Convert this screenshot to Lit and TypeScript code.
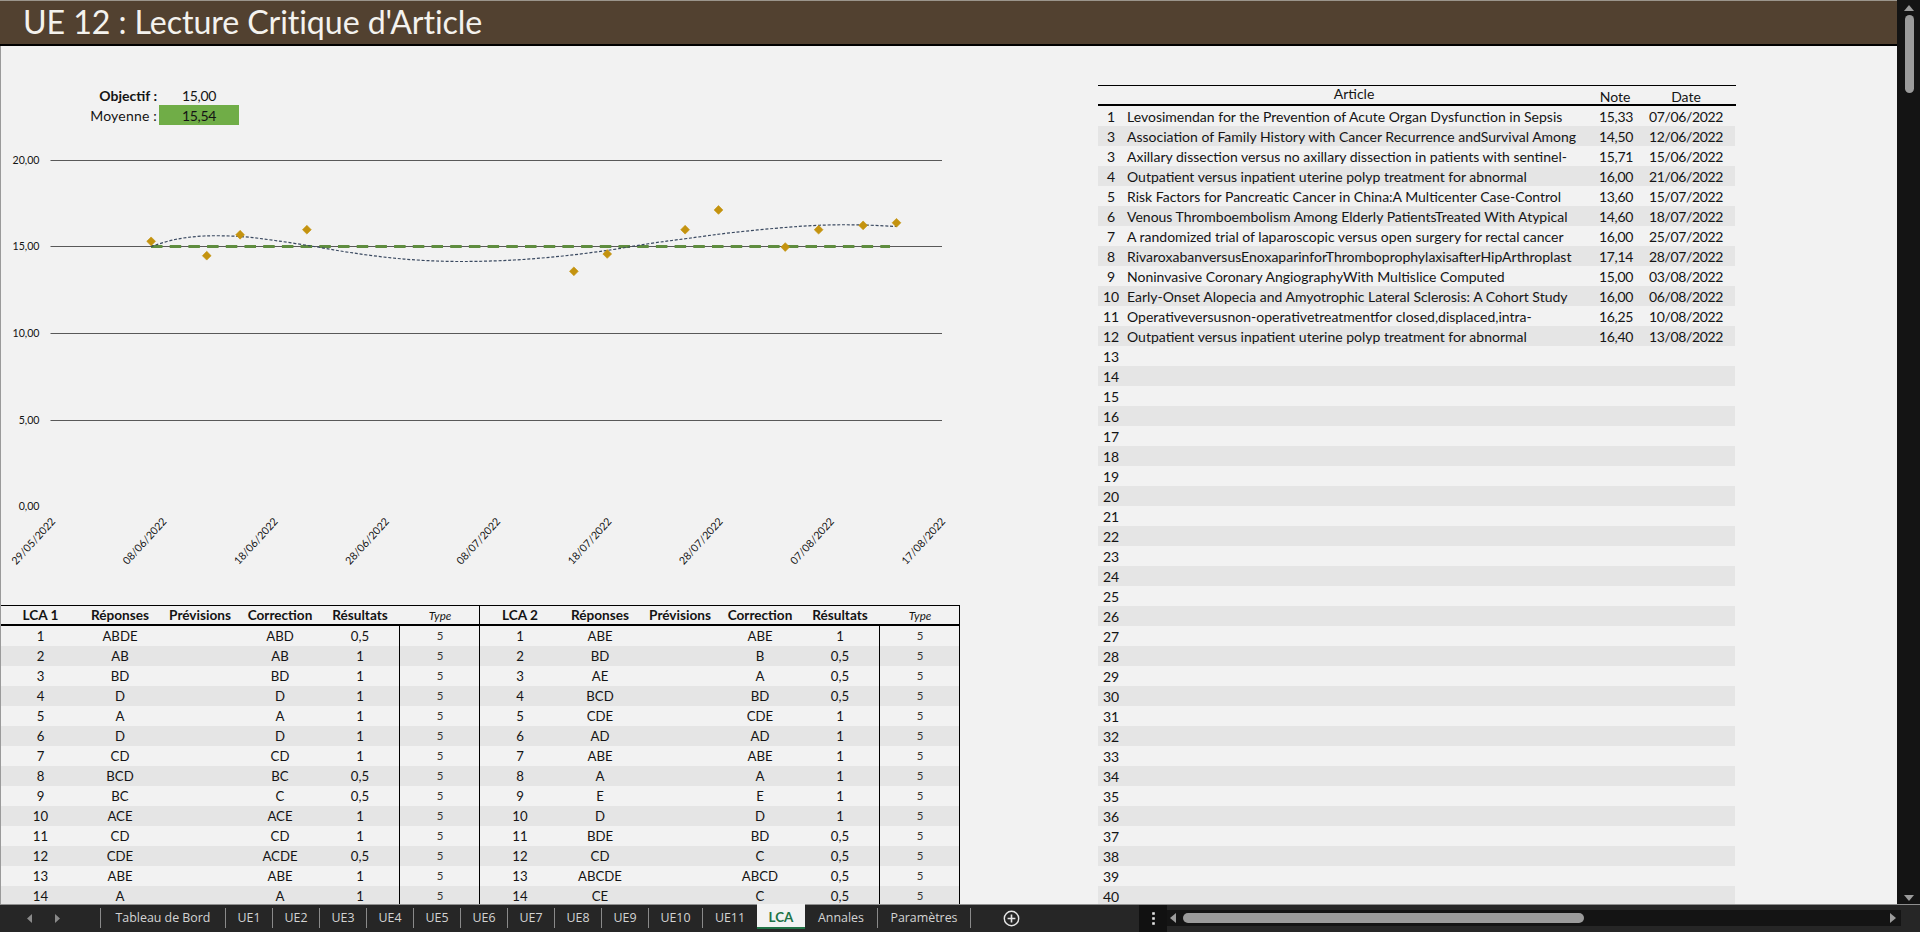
import { LitElement, html, css, svg } from "lit";
import { customElement } from "lit/decorators.js";

const ARTICLES: [string, string, string, string][] = [
  ["1", "Levosimendan for the Prevention of Acute Organ Dysfunction in Sepsis", "15,33", "07/06/2022"],
  ["3", "Association of Family History with Cancer Recurrence andSurvival Among", "14,50", "12/06/2022"],
  ["3", "Axillary dissection versus no axillary dissection in patients with sentinel-", "15,71", "15/06/2022"],
  ["4", "Outpatient versus inpatient uterine polyp treatment for abnormal", "16,00", "21/06/2022"],
  ["5", "Risk Factors for Pancreatic Cancer in China:A Multicenter Case-Control", "13,60", "15/07/2022"],
  ["6", "Venous Thromboembolism Among Elderly PatientsTreated With Atypical", "14,60", "18/07/2022"],
  ["7", "A randomized trial of laparoscopic versus open surgery for rectal cancer", "16,00", "25/07/2022"],
  ["8", "RivaroxabanversusEnoxaparinforThromboprophylaxisafterHipArthroplast", "17,14", "28/07/2022"],
  ["9", "Noninvasive Coronary AngiographyWith Multislice Computed", "15,00", "03/08/2022"],
  ["10", "Early-Onset Alopecia and Amyotrophic Lateral Sclerosis: A Cohort Study", "16,00", "06/08/2022"],
  ["11", "Operativeversusnon-operativetreatmentfor closed,displaced,intra-", "16,25", "10/08/2022"],
  ["12", "Outpatient versus inpatient uterine polyp treatment for abnormal", "16,40", "13/08/2022"],
];
for (let i = 13; i <= 40; i++) ARTICLES.push([String(i), "", "", ""]);

const LCA1 = [
  ["ABDE", "ABD", "0,5"], ["AB", "AB", "1"], ["BD", "BD", "1"], ["D", "D", "1"], ["A", "A", "1"],
  ["D", "D", "1"], ["CD", "CD", "1"], ["BCD", "BC", "0,5"], ["BC", "C", "0,5"], ["ACE", "ACE", "1"],
  ["CD", "CD", "1"], ["CDE", "ACDE", "0,5"], ["ABE", "ABE", "1"], ["A", "A", "1"],
];
const LCA2 = [
  ["ABE", "ABE", "1"], ["BD", "B", "0,5"], ["AE", "A", "0,5"], ["BCD", "BD", "0,5"], ["CDE", "CDE", "1"],
  ["AD", "AD", "1"], ["ABE", "ABE", "1"], ["A", "A", "1"], ["E", "E", "1"], ["D", "D", "1"],
  ["BDE", "BD", "0,5"], ["CD", "C", "0,5"], ["ABCDE", "ABCD", "0,5"], ["CE", "C", "0,5"],
];

const TABS: [string, number][] = [
  ["Tableau de Bord", 125], ["UE1", 47], ["UE2", 47], ["UE3", 47], ["UE4", 47], ["UE5", 47], ["UE6", 47],
  ["UE7", 47], ["UE8", 47], ["UE9", 47], ["UE10", 54], ["UE11", 55], ["LCA", 48], ["Annales", 72], ["Paramètres", 93],
];

const X = (d: number) => 51 + 11.125 * d;
const Y = (v: number) => 507 - v * 17.33;
const POINTS: [number, number][] = [
  [9, 15.33], [14, 14.5], [17, 15.71], [23, 16], [47, 13.6], [50, 14.6], [57, 16], [60, 17.14], [66, 15], [69, 16], [73, 16.25], [76, 16.4],
];
const TREND: [number, number][] = [
  [151, 246.5], [175, 239.5], [204, 236], [240, 236.5], [275, 240.5], [314, 246.5], [350, 252.5], [388, 257.5], [425, 260.5], [465, 261.5],
  [514, 260], [563, 256], [610, 250], [650, 243.5], [687, 238.5], [733, 232.5], [787, 227.3], [827, 225], [863, 225], [897, 226.5],
];
function spline(p: [number, number][]) {
  let d = `M${p[0][0]} ${p[0][1]}`;
  for (let i = 0; i < p.length - 1; i++) {
    const a = p[Math.max(i - 1, 0)], b = p[i], c = p[i + 1], e = p[Math.min(i + 2, p.length - 1)];
    d += ` C${b[0] + (c[0] - a[0]) / 6} ${b[1] + (c[1] - a[1]) / 6} ${c[0] - (e[0] - b[0]) / 6} ${c[1] - (e[1] - b[1]) / 6} ${c[0]} ${c[1]}`;
  }
  return d;
}
const AXIS_Y: [string, number][] = [["20,00", 160.5], ["15,00", 246.5], ["10,00", 333.5], ["5,00", 420.5], ["0,00", 507]];
const DATES = ["29/05/2022", "08/06/2022", "18/06/2022", "28/06/2022", "08/07/2022", "18/07/2022", "28/07/2022", "07/08/2022", "17/08/2022"];

@customElement("app-root")
export class AppRoot extends LitElement {
  static styles = css`
    :host { display: block; width: 1920px; height: 932px; overflow: hidden; font-family: "Lato", "Open Sans", sans-serif; color: #141414; background: #f2f2f2; }
    .app { display: flex; flex-direction: column; height: 932px; }
    .top { display: flex; height: 904px; }
    .main { flex: 1; min-width: 0; display: flex; flex-direction: column; }
    .title { height: 46px; box-sizing: border-box; border-top: 1px solid #9b958c; border-bottom: 2px solid #000; background: #524130; color: #f4f2ee; font-size: 32.2px; line-height: 42px; padding-left: 23px; letter-spacing: -0.1px; white-space: nowrap; }
    .sheet { flex: 1; min-height: 0; display: flex; overflow: hidden; border-left: 1px solid #9a9a9a; background: #f2f2f2; }
    .left { width: 959px; flex: none; padding-top: 39px; display: flex; flex-direction: column; }
    .stats { display: grid; grid-template-columns: 78px 80px 80px; grid-auto-rows: 20px; font-size: 14px; line-height: 21px; }
    .stats .lab { grid-column: 2; text-align: right; padding-right: 2px; white-space: nowrap; letter-spacing: 0.2px; }
    .stats .b { font-weight: 700; letter-spacing: 0; }
    .stats .val { text-align: center; letter-spacing: -0.35px; }
    .stats .green { background: #70ad47; }
    .chart { display: block; width: 959px; height: 480px; flex: none; }
    .ax { font-size: 10.6px; fill: #141414; font-family: "Lato", sans-serif; }
    .tables { display: flex; }
    .lca { width: 480px; box-sizing: border-box; border-right: 1px solid #000; }
    .lca.one { width: 479px; }
    .hrow, .row { display: grid; grid-template-columns: repeat(6, 80px); text-align: center; }
    .lca.one .hrow, .lca.one .row { grid-template-columns: 79px repeat(5, 80px); }
    .hrow { height: 21px; box-sizing: border-box; border-top: 1px solid #000; border-bottom: 2px solid #000; font-weight: 700; font-size: 13.6px; line-height: 19px; white-space: nowrap; }
    .hrow .ty { font-weight: 400; font-style: italic; font-size: 11.6px; line-height: 20px; }
    .row { height: 20px; font-size: 13.2px; line-height: 21px; }
    .row.alt { background: #e5e5e5; }
    .row .ty { border-left: 1px solid #000; margin-left: -1px; font-size: 11.4px; line-height: 20px; color: #333; }
    .right { width: 638px; flex: none; padding-top: 39px; margin-left: 138px; }
    .ahead { display: grid; grid-template-columns: 26px 460px 62px 80px; height: 21px; box-sizing: border-box; border-top: 1px solid #000; border-bottom: 2px solid #000; font-size: 14px; text-align: center; }
    .ahead .art { line-height: 16px; }
    .ahead .nt { line-height: 21px; }
    .arow { display: grid; grid-template-columns: 26px 463px 58px 82px; width: 637px; height: 20px; font-size: 14px; line-height: 22px; white-space: nowrap; }
    .arow.alt { background: #e5e5e5; }
    .arow .n { text-align: center; }
    .arow .t { padding-left: 3px; overflow: hidden; }
    .arow .c { text-align: center; letter-spacing: -0.35px; }
    .vbar { width: 23px; flex: none; background: #141414; display: flex; flex-direction: column; align-items: center; padding: 5px 0 3px 1px; box-sizing: border-box; }
    .vthumb { width: 9px; height: 78px; margin-top: 4px; border-radius: 5px; background: #9b9b9b; }
    .vspace { flex: 1; }
    .tabbar { height: 28px; box-sizing: border-box; display: flex; background: #262626; border-top: 1px solid #8f8f8f; }
    .nav { width: 100px; flex: none; display: flex; align-items: center; padding-left: 27px; gap: 23px; box-sizing: border-box; }
    .tab { box-sizing: border-box; flex: none; margin-top: 3px; height: 20px; border-left: 1px solid #8a8a8a; color: #d4d4d4; font-family: "Open Sans", sans-serif; font-size: 12.4px; line-height: 19px; text-align: center; white-space: nowrap; }
    .tab.end { width: 1px; }
    .tab.on { margin-top: -1px; height: 25px; border-left: 0; border-bottom: 2px solid #217346; background: #f2f2f2; color: #217346; font-weight: 700; font-size: 13.4px; line-height: 26px; font-family: "Lato", sans-serif; }
    .tab.on + .tab { border-left: 0; }
    .plus { width: 168px; flex: none; display: flex; align-items: center; padding-left: 32px; box-sizing: border-box; }
    .menu { width: 28px; flex: none; background: #111; display: flex; align-items: center; justify-content: center; }
    .hbar { flex: 1; min-width: 0; height: 16px; margin-top: 5px; background: #141414; display: flex; align-items: center; padding: 0 5px 0 3px; box-sizing: border-box; }
    .hthumb { width: 401px; height: 10px; margin-left: 7px; border-radius: 5px; background: #9b9b9b; }
    .hspace { flex: 1; }
    .corner { width: 19px; flex: none; }
    svg.i { display: block; flex: none; }
  `;

  private row(r: string[], i: number) {
    return html`<div class="row ${i % 2 ? "alt" : ""}">
      <div>${i + 1}</div><div>${r[0]}</div><div></div><div>${r[1]}</div><div>${r[2]}</div><div class="ty">5</div>
    </div>`;
  }

  private table(name: string, rows: string[][], cls: string) {
    return html`<div class="lca ${cls}">
      <div class="hrow"><div>${name}</div><div>Réponses</div><div>Prévisions</div><div>Correction</div><div>Résultats</div><div class="ty">Type</div></div>
      ${rows.map((r, i) => this.row(r, i))}
    </div>`;
  }

  private chart() {
    return html`<svg class="chart" viewBox="1 125 959 480">
      ${AXIS_Y.map(([l, y]) => svg`
        ${y < 500 ? svg`<line x1="50.5" x2="942" y1=${y} y2=${y} stroke="#595959" stroke-width="1.2"/>` : ""}
        <text class="ax" x="39.5" y=${y + 3} text-anchor="end">${l}</text>`)}
      ${DATES.map((d, i) => svg`<text class="ax" text-anchor="end" transform="translate(${53 + i * 111.25 + 3} ${519 + 3}) rotate(-47.5)">${d}</text>`)}
      <line x1="151" x2="890" y1="246.5" y2="246.5" stroke="#5f8d3f" stroke-width="3" stroke-dasharray="11.5 7.2"/>
      <path d=${spline(TREND)} fill="none" stroke="#3a4960" stroke-width="1.2" stroke-dasharray="3 1.8"/>
      ${POINTS.map(([d, v]) => svg`<rect x=${X(d) - 3.1} y=${Y(v) - 3.1} width="6.2" height="6.2" fill="#c4930f" stroke="#c4930f" stroke-width=".6" transform="rotate(45 ${X(d)} ${Y(v)})"/>`)}
    </svg>`;
  }

  render() {
    return html`<div class="app">
      <div class="top">
        <div class="main">
          <div class="title">UE 12 : Lecture Critique d'Article</div>
          <div class="sheet">
            <div class="left">
              <div class="stats">
                <div class="lab b">Objectif :</div><div class="val">15,00</div>
                <div class="lab">Moyenne :</div><div class="val green">15,54</div>
              </div>
              ${this.chart()}
              <div class="tables">${this.table("LCA 1", LCA1, "one")}${this.table("LCA 2", LCA2, "")}</div>
            </div>
            <div class="right">
              <div class="ahead"><div></div><div class="art">Article</div><div class="nt">Note</div><div class="nt">Date</div></div>
              ${ARTICLES.map((a, i) => html`<div class="arow ${i % 2 ? "alt" : ""}">
                <div class="n">${a[0]}</div><div class="t">${a[1]}</div><div class="c">${a[2]}</div><div class="c">${a[3]}</div>
              </div>`)}
            </div>
          </div>
        </div>
        <div class="vbar">
          <svg class="i" width="10" height="6" viewBox="0 0 10 6"><path d="M5 0L10 6H0z" fill="#9b9b9b"/></svg>
          <div class="vthumb"></div>
          <div class="vspace"></div>
          <svg class="i" width="10" height="6" viewBox="0 0 10 6"><path d="M0 0H10L5 6z" fill="#9b9b9b"/></svg>
        </div>
      </div>
      <div class="tabbar">
        <div class="nav">
          <svg class="i" width="5" height="9" viewBox="0 0 5 9"><path d="M5 0V9L0 4.5z" fill="#8a8a8a"/></svg>
          <svg class="i" width="5" height="9" viewBox="0 0 5 9"><path d="M0 0V9L5 4.5z" fill="#8a8a8a"/></svg>
        </div>
        ${TABS.map(([t, w]) => html`<div class="tab ${t === "LCA" ? "on" : ""}" style="width:${w}px">${t}</div>`)}
        <div class="tab end"></div>
        <div class="plus">
          <svg class="i" width="17" height="17" viewBox="0 0 17 17"><circle cx="8.5" cy="8.5" r="7.2" fill="none" stroke="#e6e6e6" stroke-width="1.4"/><path d="M8.5 4.6V12.4M4.6 8.5H12.4" stroke="#e6e6e6" stroke-width="1.6"/></svg>
        </div>
        <div class="menu">
          <svg class="i" width="3" height="13" viewBox="0 0 3 13"><path d="M.2 .2H2.8V2.8H.2zM.2 5.2H2.8V7.8H.2zM.2 10.2H2.8V12.8H.2z" fill="#e6e6e6"/></svg>
        </div>
        <div class="hbar">
          <svg class="i" width="6" height="10" viewBox="0 0 6 10"><path d="M6 0V10L0 5z" fill="#9b9b9b"/></svg>
          <div class="hthumb"></div>
          <div class="hspace"></div>
          <svg class="i" width="6" height="10" viewBox="0 0 6 10"><path d="M0 0V10L6 5z" fill="#9b9b9b"/></svg>
        </div>
        <div class="corner"></div>
      </div>
    </div>`;
  }
}
